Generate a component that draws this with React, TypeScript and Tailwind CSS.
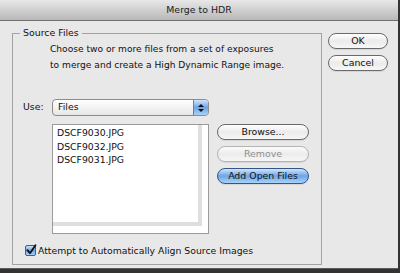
const font = { fontFamily: '"DejaVu Sans", Verdana, sans-serif' };

function AquaButton({
  label,
  kind = "normal",
  className = "",
}: {
  label: string;
  kind?: "normal" | "disabled" | "default";
  className?: string;
}) {
  const skin =
    kind === "default"
      ? "border-[#34558c] bg-gradient-to-b from-[#cfe5fb] via-[#6da5e7] to-[#a9d2f8] text-[#111]"
      : kind === "disabled"
        ? "border-[#b4b4b4] bg-gradient-to-b from-[#fbfbfb] via-[#ececec] to-[#f6f6f6] text-[#8e8e8e]"
        : "border-[#6a6a6a] bg-gradient-to-b from-[#ffffff] via-[#ebebeb] to-[#f7f7f7] text-[#111]";
  return (
    <div
      className={`flex h-[16px] items-center justify-center rounded-full border text-[9.4px] leading-none shadow-[0_1px_0_rgba(0,0,0,0.08)] ${skin} ${className}`}
    >
      {label}
    </div>
  );
}

function Checkbox() {
  return (
    <div className="relative h-[11px] w-[11px] rounded-[2px] border border-[#3c5f93] bg-gradient-to-b from-[#c9e1f9] via-[#6fa6e6] to-[#a7cff6]">
      <svg viewBox="0 0 11 11" className="absolute -left-[1px] -top-[2px] h-[12px] w-[12px]">
        <path d="M2.2 5.6 L4.6 8.4 L9.6 1.2" fill="none" stroke="#111" strokeWidth="1.7" strokeLinecap="round" strokeLinejoin="round" />
      </svg>
    </div>
  );
}

function Popup() {
  return (
    <div className="flex h-[17px] w-[157px] overflow-hidden rounded-[4px] border border-[#8c8c8c] bg-gradient-to-b from-[#ffffff] to-[#e6e6e6]">
      <div className="flex flex-1 items-center pl-[5px] text-[9.4px] text-[#111]">Files</div>
      <div className="flex w-[15px] flex-col items-center justify-center gap-[2px] border-l border-[#5c83b8] bg-gradient-to-b from-[#cfe5fb] via-[#6ca4e6] to-[#a9d2f8]">
        <svg width="6" height="3" viewBox="0 0 6 3">
          <path d="M0 3 L3 0 L6 3 Z" fill="#111" />
        </svg>
        <svg width="6" height="3" viewBox="0 0 6 3">
          <path d="M0 0 L3 3 L6 0 Z" fill="#111" />
        </svg>
      </div>
    </div>
  );
}

export default function App() {
  const files = ["DSCF9030.JPG", "DSCF9032.JPG", "DSCF9031.JPG"];
  return (
    <div className="h-[273px] w-[400px] bg-[#35332f]" style={font}>
      <div className="flex h-[269px] w-[398px] flex-col border-b border-[#5a5a5a] bg-[#e8e8e8]">
        <div className="flex h-[21px] items-center justify-center border-b border-[#6e6e6e] bg-gradient-to-b from-[#e8e8e8] to-[#b8b8b8] text-[9.4px] text-[#1c1c1c]">
          Merge to HDR
        </div>

        <div className="flex">
          <fieldset className="ml-[12px] mt-[4px] h-[240px] w-[310px] border border-[#a2a2a2]">
            <legend className="ml-[7px] px-[3px] text-[9.4px] leading-[16px] text-[#111]">
              Source Files
            </legend>

            <div className="pl-[37px] text-[9.1px] leading-[16px] text-[#111]">
              <div>Choose two or more files from a set of exposures</div>
              <div>to merge and create a High Dynamic Range image.</div>
            </div>

            <div className="mt-[26px] flex items-center pl-[10px]">
              <div className="w-[29px] text-[9.4px] text-[#111]">Use:</div>
              <Popup />
            </div>

            <div className="mt-[8px] flex pl-[39px]">
              <div className="h-[110px] w-[157px] border border-[#9a9a9a] bg-white">
                <div className="h-[101px] w-[149px] border-b-[4px] border-r-[4px] border-[#dedede] pl-[4px] pt-[1px] text-[9.3px] leading-[13.5px] text-[#111]">
                  {files.map((f) => (
                    <div key={f}>{f}</div>
                  ))}
                </div>
              </div>
              <div className="ml-[8px] flex w-[92px] flex-col gap-[6px]">
                <AquaButton label="Browse..." />
                <AquaButton label="Remove" kind="disabled" />
                <AquaButton label="Add Open Files" kind="default" />
              </div>
            </div>

            <div className="mt-[10px] flex items-center gap-[2px] pl-[12px]">
              <Checkbox />
              <span className="text-[9.3px] text-[#111]">
                Attempt to Automatically Align Source Images
              </span>
            </div>
          </fieldset>

          <div className="ml-[6px] mt-[12px] flex w-[60px] flex-col gap-[6px]">
            <AquaButton label="OK" className="h-[15px]" />
            <AquaButton label="Cancel" className="h-[15px]" />
          </div>
        </div>
      </div>
    </div>
  );
}
